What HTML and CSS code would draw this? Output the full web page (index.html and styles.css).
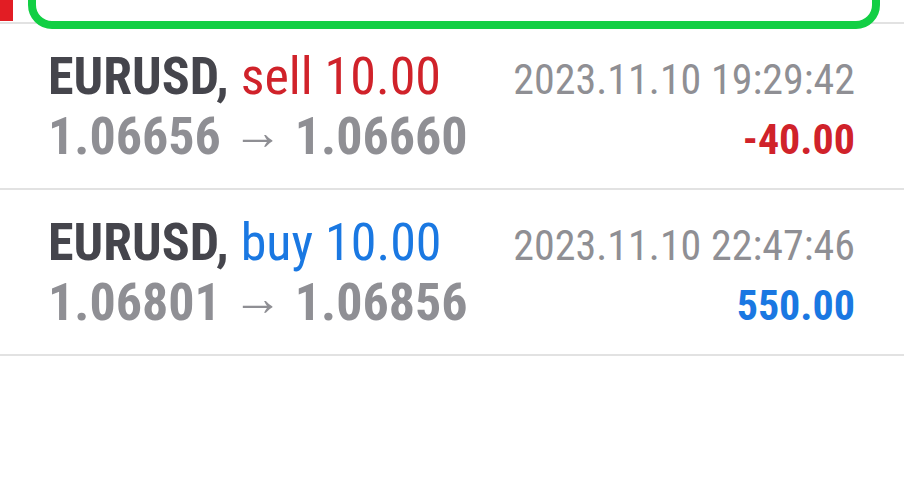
FILE: index.html
```html
<!DOCTYPE html>
<html lang="en">
<head>
    <meta charset="UTF-8">
    <meta name="viewport" content="width=device-width, initial-scale=1.0">
    <title>History</title>
    <link rel="stylesheet" href="styles.css">
</head>
<body>
    <div class="screen">
        <!-- Top strip, partly scrolled off -->
        <div class="top-strip">
            <div class="marker"></div>
        </div>
        <div class="highlight"></div>

        <!-- Deals -->
        <div class="deal">
            <div class="line">
                <div class="title">EURUSD, <span class="sell">sell 10.00</span></div>
                <div class="time">2023.11.10 19:29:42</div>
            </div>
            <div class="line">
                <div class="prices">1.06656 <span class="arrow">→</span> 1.06660</div>
                <div class="profit loss">-40.00</div>
            </div>
        </div>

        <div class="deal">
            <div class="line">
                <div class="title">EURUSD, <span class="buy">buy 10.00</span></div>
                <div class="time">2023.11.10 22:47:46</div>
            </div>
            <div class="line">
                <div class="prices">1.06801 <span class="arrow">→</span> 1.06856</div>
                <div class="profit gain">550.00</div>
            </div>
        </div>
    </div>
</body>
</html>
```

FILE: styles.css
```css
body {
    margin: 0;
    padding: 0;
    background-color: #fff;
    font-family: "Roboto Condensed", Roboto, sans-serif;
    font-stretch: condensed;
}

.screen {
    position: relative;
    width: 904px;
    height: 480px;
    overflow: hidden;
}

.top-strip {
    height: 22px;
    border-bottom: 2px solid #e2e2e2;
}

.marker {
    width: 13px;
    height: 21px;
    background-color: #e21d24;
}

.highlight {
    position: absolute;
    left: 28px;
    top: -60px;
    width: 836px;
    height: 73px;
    border: 8px solid #12cf44;
    border-radius: 24px;
    background-color: #fff;
}

.deal {
    padding: 23px 49px 21px 48px;
    border-bottom: 2px solid #e2e2e2;
}

.line {
    display: flex;
    justify-content: space-between;
    align-items: baseline;
    height: 60px;
    line-height: 60px;
}

.title {
    font-size: 52px;
    font-weight: bold;
    color: #45454c;
}

.sell, .buy {
    font-weight: normal;
}

.sell {
    color: #d0222a;
}

.buy {
    color: #1a78e2;
}

.time {
    font-size: 42px;
    color: #8f8f94;
}

.prices {
    font-size: 52px;
    font-weight: bold;
    color: #8f8f94;
}

.arrow {
    font-weight: normal;
    font-size: 50px;
    line-height: 0;
    vertical-align: 0.1em;
}

.profit {
    font-size: 42px;
    font-weight: bold;
}

.loss {
    color: #d0222a;
}

.gain {
    color: #1a78e2;
}
```
